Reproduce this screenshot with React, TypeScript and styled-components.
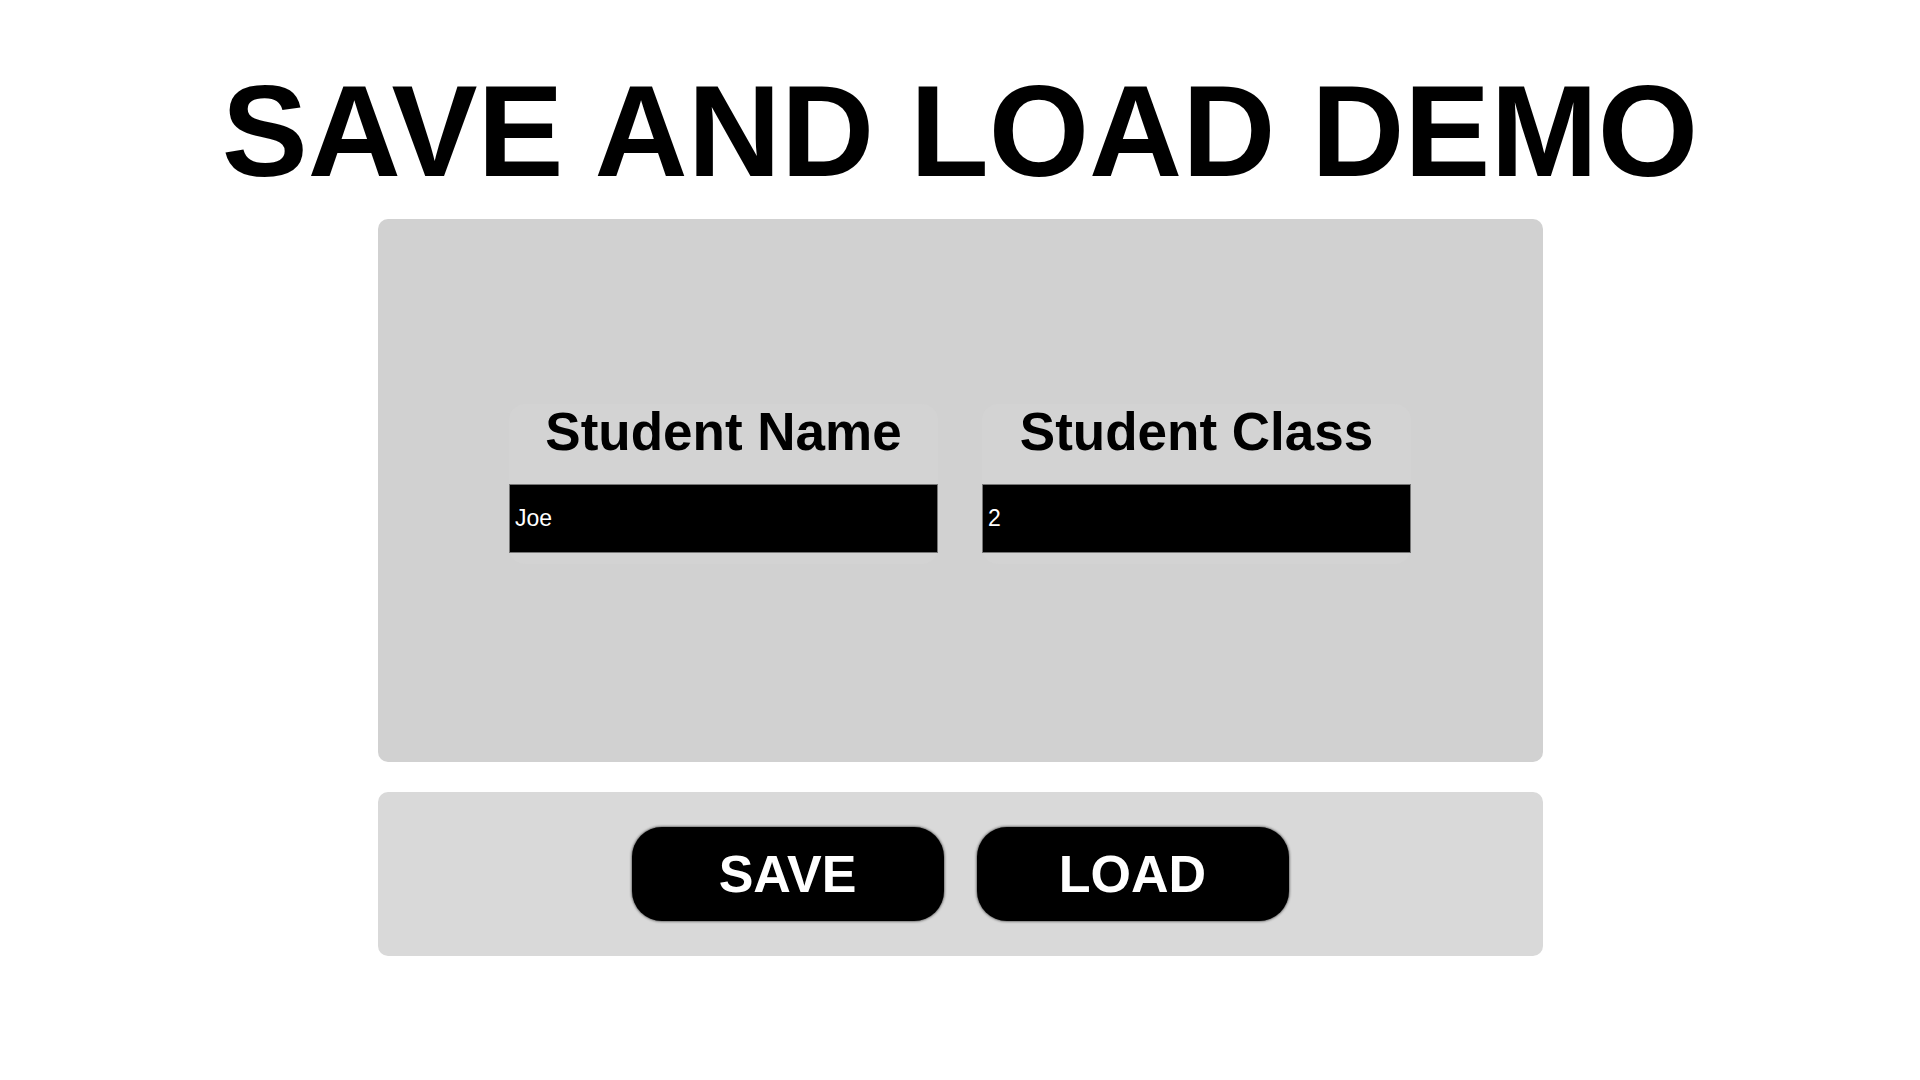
import React from "react";
import styled, { createGlobalStyle } from "styled-components";

const GlobalStyle = createGlobalStyle`
  body {
    margin: 0;
    background: #fff;
    font-family: "Liberation Sans", Arial, sans-serif;
  }
`;

const Page = styled.div`
  display: flex;
  flex-direction: column;
  align-items: center;
  padding-top: 56px;
`;

const Title = styled.h1`
  margin: 0 0 13px;
  font-size: 129px;
  font-weight: 700;
  line-height: 150px;
  color: #000;
`;

const Panel = styled.div<{ $height: number; $bg: string }>`
  box-sizing: border-box;
  width: 1165px;
  height: ${(p) => p.$height}px;
  border-radius: 10px;
  background: ${(p) => p.$bg};
  display: flex;
  justify-content: center;
`;

const FormPanel = styled(Panel)`
  align-items: flex-start;
  padding-top: 185px;
  gap: 44px;
  margin-bottom: 30px;
`;

const ButtonPanel = styled(Panel)`
  align-items: center;
  gap: 33px;
`;

const Field = styled.div`
  width: 429px;
  display: flex;
  flex-direction: column;
  align-items: center;
  padding-bottom: 11px;
  border-radius: 16px;
  background: #d3d3d3;
`;

const Label = styled.label`
  font-size: 53px;
  font-weight: 700;
  line-height: 56px;
  color: #000;
  margin-bottom: 24px;
`;

const Input = styled.input`
  box-sizing: border-box;
  width: 429px;
  height: 69px;
  margin: 0;
  padding: 0 5px;
  border: 1px solid #767676;
  background: #000;
  color: #fff;
  font-family: "Liberation Sans", Arial, sans-serif;
  font-size: 23px;
  outline: none;
`;

const Button = styled.button`
  width: 312px;
  height: 94px;
  border: none;
  border-radius: 30px;
  background: #000;
  box-shadow: 0 0 3px rgba(0, 0, 0, 0.9);
  color: #fff;
  font-family: "Liberation Sans", Arial, sans-serif;
  font-size: 52px;
  font-weight: 700;
  cursor: pointer;
`;

const fields = [
  { label: "Student Name", value: "Joe" },
  { label: "Student Class", value: "2" },
];

export default function App() {
  return (
    <>
      <GlobalStyle />
      <Page>
        <Title>SAVE AND LOAD DEMO</Title>
        <FormPanel $height={543} $bg="#d1d1d1">
          {fields.map((f) => (
            <Field key={f.label}>
              <Label>{f.label}</Label>
              <Input defaultValue={f.value} />
            </Field>
          ))}
        </FormPanel>
        <ButtonPanel $height={164} $bg="#d9d9d9">
          <Button>SAVE</Button>
          <Button>LOAD</Button>
        </ButtonPanel>
      </Page>
    </>
  );
}
